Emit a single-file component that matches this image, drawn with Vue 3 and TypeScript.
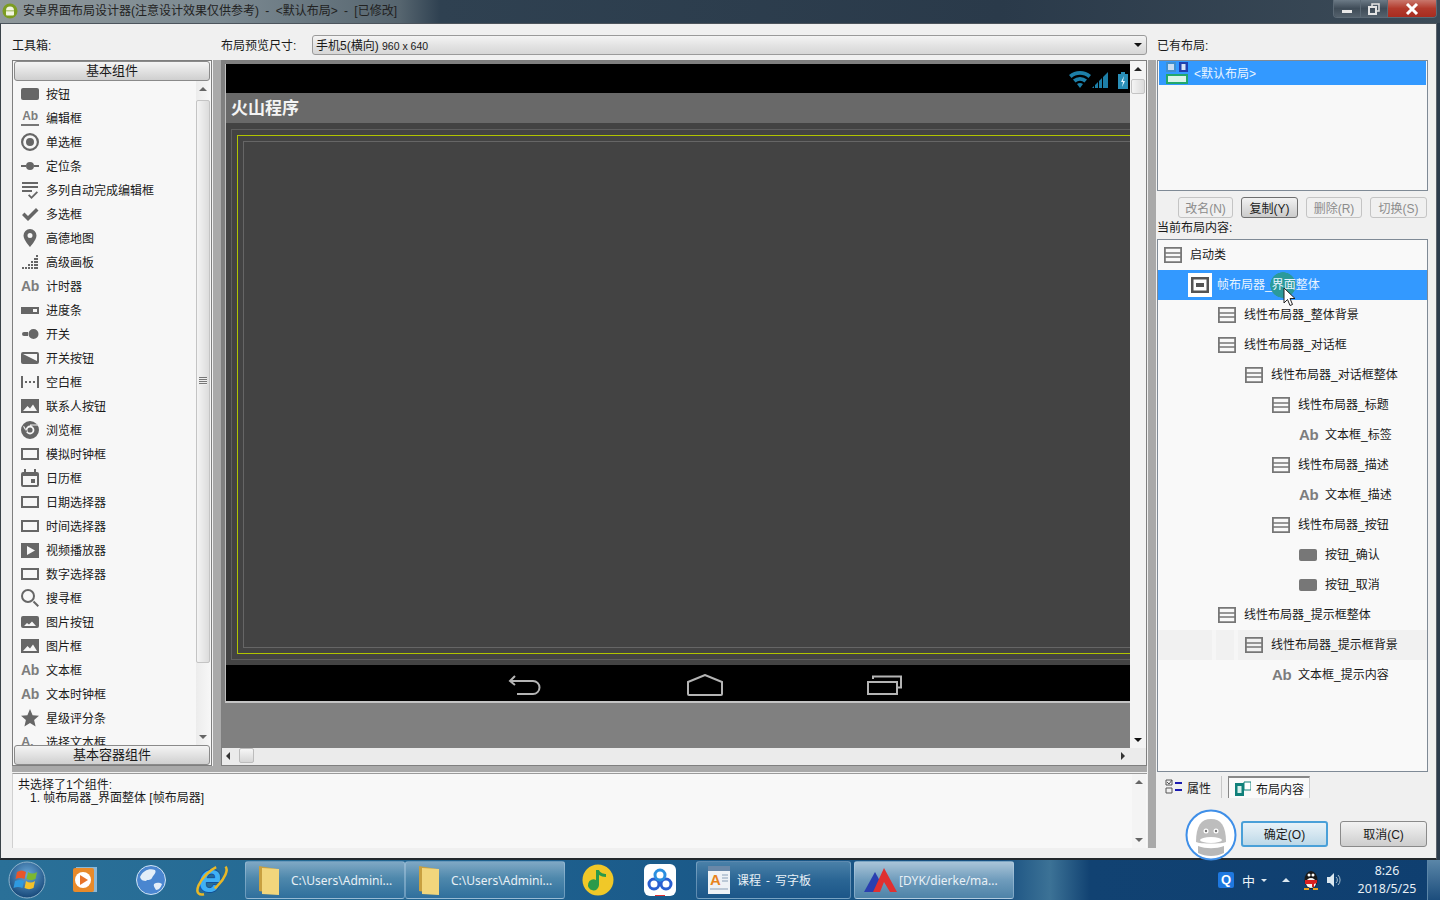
<script setup lang="ts">
type ToolItem = { label: string; icon: string };
type TreeItem = { label: string; icon: string; level: number; selected?: boolean; hover?: boolean };

const stair = [
    [15, 2], [13, 5], [15, 5], [10, 8], [13, 8], [15, 8], [7, 11], [10, 11], [13, 11], [15, 11],
    [1, 14], [4, 14], [7, 14], [10, 14], [13, 14], [15, 14],
]
    .map(([x, y]) => `M${x} ${y}h2v2h-2z`)
    .join('');

const paths: Record<string, string> = {
    button: 'M2 3h14a2 2 0 0 1 2 2v8a2 2 0 0 1-2 2H2a2 2 0 0 1-2-2V5a2 2 0 0 1 2-2z',
    radio: 'M9 0a9 9 0 1 0 0 18a9 9 0 1 0 0-18z M9 2.2a6.8 6.8 0 1 1 0 13.6a6.8 6.8 0 1 1 0-13.6z M9 5a4 4 0 1 0 0 8a4 4 0 1 0 0-8z',
    seek: 'M0 8h5v2H0z M13 8h5v2h-5z M9 5a4 4 0 1 0 0 8a4 4 0 1 0 0-8z',
    auto: 'M1 1h16v2H1z M1 5h16v2H1z M1 9h10v2H1z M7 14.5l1.3-1.3 2.2 2.2 5.2-5.2 1.3 1.3-6.5 6.5z',
    check: 'M1 10l2.5-2.5 3.5 3.5 8-8L17.5 5.5 7 16z',
    pin: 'M9 0a6.5 6.5 0 0 0-6.5 6.5C2.5 11 9 18 9 18s6.5-7 6.5-11.5A6.5 6.5 0 0 0 9 0z M9 4a2.5 2.5 0 1 1 0 5a2.5 2.5 0 1 1 0-5z',
    dots: stair,
    progress: 'M0 6h18v7H0z M12 8h4v3h-4z',
    switch: 'M3 7h4v4H3a2 2 0 0 1 0-4z M12.5 4a5 5 0 1 0 0 10a5 5 0 1 0 0-10z',
    toggle: 'M2 3h14a2 2 0 0 1 2 2v8a2 2 0 0 1-2 2H2a2 2 0 0 1-2-2V5a2 2 0 0 1 2-2z M2 5l14 7V5z',
    space: 'M0 3h2v12H0z M16 3h2v12h-2z M4 8h2v2H4z M8 8h2v2H8z M12 8h2v2h-2z',
    image: 'M0 2h18v14H0z M2 14l4.5-5 2.5 2.5 3-4 4 6.5z',
    imagebtn: 'M2 3h14a2 2 0 0 1 2 2v8a2 2 0 0 1-2 2H2a2 2 0 0 1-2-2V5a2 2 0 0 1 2-2z M3 13l3-3 2 1.5 3-3 4 4.5z',
    chrome: 'M9 0a9 9 0 1 0 0 18a9 9 0 1 0 0-18z M9 4.6a4.4 4.4 0 1 1 0 8.8a4.4 4.4 0 1 1 0-8.8z M9 6.4a2.6 2.6 0 1 0 0 5.2a2.6 2.6 0 1 0 0-5.2z M9 3.6h7.4v1H9z M3 5l3.2 5.4-.9.5L2.100 5.500z',
    frame: 'M0 3h18v12H0z M2 5v8h14V5z',
    calendar: 'M3 0h2v3h8V0h2v3h1a2 2 0 0 1 2 2v11a2 2 0 0 1-2 2H2a2 2 0 0 1-2-2V5a2 2 0 0 1 2-2h1z M2 7v9h14V7z M10 10h4v4h-4z',
    video: 'M0 2h18v15H0z M6 5v9l8-4.500z',
    search: 'M7 0a7 7 0 1 0 0 14a7 7 0 1 0 0-14z M7 2a5 5 0 1 1 0 10a5 5 0 1 1 0-10z M11.800 13.200l1.400-1.400 4.800 4.800-1.400 1.400z',
    star: 'M9 0l2.600 6.200 6.400.5-4.900 4.200 1.500 6.600L9 14l-5.600 3.500 1.500-6.600L0 6.700l6.400-.5z',
    linear: 'M0 1h18v16H0z M1.800 2.800v3.400h14.400V2.800z M1.800 7.800v2.400h14.400V7.800z M1.800 11.800v3.400h14.400v-3.400z',
    framelayout: 'M0 1h18v16H0z M2.500 3.500v11h13v-11z M5 7h8v4H5z',
};

const tools: ToolItem[] = [
    { label: '按钮', icon: 'button' },
    { label: '编辑框', icon: 'abu' },
    { label: '单选框', icon: 'radio' },
    { label: '定位条', icon: 'seek' },
    { label: '多列自动完成编辑框', icon: 'auto' },
    { label: '多选框', icon: 'check' },
    { label: '高德地图', icon: 'pin' },
    { label: '高级画板', icon: 'dots' },
    { label: '计时器', icon: 'ab' },
    { label: '进度条', icon: 'progress' },
    { label: '开关', icon: 'switch' },
    { label: '开关按钮', icon: 'toggle' },
    { label: '空白框', icon: 'space' },
    { label: '联系人按钮', icon: 'image' },
    { label: '浏览框', icon: 'chrome' },
    { label: '模拟时钟框', icon: 'frame' },
    { label: '日历框', icon: 'calendar' },
    { label: '日期选择器', icon: 'frame' },
    { label: '时间选择器', icon: 'frame' },
    { label: '视频播放器', icon: 'video' },
    { label: '数字选择器', icon: 'frame' },
    { label: '搜寻框', icon: 'search' },
    { label: '图片按钮', icon: 'imagebtn' },
    { label: '图片框', icon: 'image' },
    { label: '文本框', icon: 'ab' },
    { label: '文本时钟框', icon: 'ab' },
    { label: '星级评分条', icon: 'star' },
    { label: '选择文本框', icon: 'abs' },
];

const tree: TreeItem[] = [
    { label: '启动类', icon: 'linear', level: 0 },
    { label: '帧布局器_界面整体', icon: 'framelayout', level: 1, selected: true },
    { label: '线性布局器_整体背景', icon: 'linear', level: 2 },
    { label: '线性布局器_对话框', icon: 'linear', level: 2 },
    { label: '线性布局器_对话框整体', icon: 'linear', level: 3 },
    { label: '线性布局器_标题', icon: 'linear', level: 4 },
    { label: '文本框_标签', icon: 'ab', level: 5 },
    { label: '线性布局器_描述', icon: 'linear', level: 4 },
    { label: '文本框_描述', icon: 'ab', level: 5 },
    { label: '线性布局器_按钮', icon: 'linear', level: 4 },
    { label: '按钮_确认', icon: 'button', level: 5 },
    { label: '按钮_取消', icon: 'button', level: 5 },
    { label: '线性布局器_提示框整体', icon: 'linear', level: 2 },
    { label: '线性布局器_提示框背景', icon: 'linear', level: 3, hover: true },
    { label: '文本框_提示内容', icon: 'ab', level: 4 },
];

const actions = [
    { label: '改名(N)', disabled: true, width: 55 },
    { label: '复制(Y)', disabled: false, width: 57 },
    { label: '删除(R)', disabled: true, width: 56 },
    { label: '切换(S)', disabled: true, width: 57 },
];
</script>

<template>
    <div class="screen">
        <header class="titlebar">
            <svg class="app-logo" viewBox="0 0 16 16">
                <circle cx="8" cy="8" r="7.500" fill="#7c9c22" />
                <path d="M4 7.500a4 4 0 0 1 8 0z M4 8.300h8v3.200a1 1 0 0 1-1 1H5a1 1 0 0 1-1-1z" fill="#f2f5e0" />
            </svg>
            <span class="title-text">安卓界面布局设计器(注意设计效果仅供参考) - &lt;默认布局&gt; - [已修改]</span>
            <div class="win-controls">
                <div class="ctl ctl-min"><i></i></div>
                <div class="ctl ctl-max">
                    <svg width="12" height="12" viewBox="0 0 12 12">
                        <path d="M4 3V1h7v7H9" fill="none" stroke="#e4e4e4" stroke-width="1.500" />
                        <path d="M1 4h7v7H1z" fill="none" stroke="#e4e4e4" stroke-width="2" />
                    </svg>
                </div>
                <div class="ctl ctl-close">
                    <svg width="14" height="12" viewBox="0 0 14 12">
                        <path d="M2 1l10 10M12 1L2 11" stroke="#fff" stroke-width="3" />
                    </svg>
                </div>
            </div>
        </header>

        <main class="window">
            <section class="work">
                <div class="toolbar">
                    <label class="toolbox-label">工具箱:</label>
                    <label class="size-label">布局预览尺寸:</label>
                    <div class="select">
                        <span class="select-text">手机5(横向) <small>960 x 640</small></span>
                        <i class="arrow-down dark"></i>
                    </div>
                </div>

                <div class="panes">
                    <div class="toolbox">
                        <button class="group-btn">基本组件</button>
                        <div class="tool-wrap">
                            <ul class="tool-list">
                                <li v-for="item in tools" :key="item.label" class="tool-row">
                                    <span v-if="item.icon === 'ab'" class="ab">Ab</span>
                                    <span v-else-if="item.icon === 'abu'" class="ab ab-under">Ab</span>
                                    <span v-else-if="item.icon === 'abs'" class="ab ab-small">A.</span>
                                    <svg v-else class="icon" viewBox="0 0 18 18">
                                        <path :d="paths[item.icon]" fill-rule="evenodd" />
                                    </svg>
                                    <span class="row-text">{{ item.label }}</span>
                                </li>
                            </ul>
                            <div class="vscroll">
                                <i class="arrow-up"></i>
                                <div class="thumb tool-thumb"><b></b></div>
                                <div class="grow"></div>
                                <i class="arrow-down"></i>
                            </div>
                        </div>
                        <button class="group-btn">基本容器组件</button>
                    </div>

                    <div class="v-split pane-split"></div>

                    <div class="preview">
                        <div class="preview-top">
                            <div class="viewport">
                                <div class="phone">
                                    <div class="status-bar">
                                        <svg width="62" height="20" viewBox="0 0 62 20">
                                            <path d="M1 6a17 17 0 0 1 22 0l-2.500 3a13 13 0 0 0-17 0z M5 10.500a11 11 0 0 1 14 0l-2.500 3a7 7 0 0 0-9 0z M9 15a5 5 0 0 1 6 0l-3 4z" fill="#1d7fa8" />
                                            <path d="M24 19h2v-2l-2 2z M27 19h3v-6l-3 3z M31 19h3V9l-3 3z M35 19h5V3l-5 5z" fill="#1d7fa8" />
                                            <path d="M50 5h3V3h4v2h3v15H50z" fill="#2a8fb8" />
                                            <path d="M56 7l-3 6h2l-1 5 3-6h-2z" fill="#e8f6ff" />
                                        </svg>
                                    </div>
                                    <div class="app-title">火山程序</div>
                                    <div class="content">
                                        <div class="guide-outer">
                                            <div class="guide-yellow">
                                                <div class="guide-inner"></div>
                                            </div>
                                        </div>
                                    </div>
                                    <div class="nav-bar">
                                        <svg width="36" height="22" viewBox="0 0 36 22" class="nav-icon">
                                            <path d="M8 2L3 7l5 4 M3 7h23a5.500 5.500 0 0 1 0 13H10" />
                                        </svg>
                                        <svg width="36" height="22" viewBox="0 0 36 22" class="nav-icon">
                                            <path d="M1 8L18 1l17 7v12a1 1 0 0 1-1 1H2a1 1 0 0 1-1-1z" />
                                        </svg>
                                        <svg width="36" height="22" viewBox="0 0 36 22" class="nav-icon">
                                            <path d="M1 8h29v12H1z M6 5V2.500h28v11h-3" />
                                        </svg>
                                    </div>
                                </div>
                            </div>
                            <div class="vscroll preview-vs">
                                <i class="arrow-up dark"></i>
                                <div class="thumb phone-thumb"></div>
                                <div class="grow"></div>
                                <i class="arrow-down dark"></i>
                            </div>
                        </div>
                        <div class="hscroll">
                            <i class="arrow-left"></i>
                            <div class="h-thumb"></div>
                            <div class="grow"></div>
                            <i class="arrow-right"></i>
                        </div>
                    </div>
                </div>

                <div class="h-split"></div>

                <div class="message">
                    <div class="message-text">
                        <p>共选择了1个组件:</p>
                        <p class="msg-line">1. 帧布局器_界面整体 [帧布局器]</p>
                    </div>
                    <div class="vscroll msg-vs">
                        <i class="arrow-up"></i>
                        <div class="grow"></div>
                        <i class="arrow-down"></i>
                    </div>
                </div>
            </section>

            <div class="v-split right-split"></div>

            <aside class="side">
                <label class="side-label">已有布局:</label>
                <div class="layouts">
                    <div class="layout-row">
                        <svg width="23" height="23" viewBox="0 0 23 23">
                            <rect x="0" y="0" width="10" height="10" fill="#3f8fd0" />
                            <rect x="2" y="2" width="6" height="6" fill="#c8dcf0" />
                            <rect x="13" y="0" width="9" height="10" fill="#2040b0" />
                            <rect x="15.500" y="2" width="4" height="6" fill="#d8e4f8" />
                            <rect x="0" y="12" width="22" height="10" fill="#22a86c" />
                            <rect x="2" y="14" width="18" height="6" fill="#d8f4e8" />
                        </svg>
                        <span class="row-text">&lt;默认布局&gt;</span>
                    </div>
                </div>
                <div class="actions">
                    <button
                        v-for="a in actions"
                        :key="a.label"
                        class="action"
                        :class="{ disabled: a.disabled }"
                        :style="{ width: a.width + 'px' }"
                    >
                        {{ a.label }}
                    </button>
                </div>
                <label class="tree-label">当前布局内容:</label>
                <div class="tree">
                    <div
                        v-for="node in tree"
                        :key="node.label"
                        class="tree-row"
                        :class="{ selected: node.selected, hover: node.hover }"
                        :style="{ paddingLeft: 6 + node.level * 27 + 'px' }"
                    >
                        <span v-if="node.icon === 'ab'" class="ab tree-ab">Ab</span>
                        <span v-else class="tree-icon">
                            <svg class="icon" viewBox="0 0 18 18">
                                <path :d="paths[node.icon]" fill-rule="evenodd" />
                            </svg>
                        </span>
                        <span class="tree-text">{{ node.label }}</span>
                    </div>
                </div>
                <div class="tabs">
                    <div class="tab">
                        <svg width="18" height="16" viewBox="0 0 18 16">
                            <path d="M1 1h6v5H1z M1 9h6v5H1z M2 3l2 2 3-4" fill="none" stroke="#555" />
                            <path d="M10 3h7v2h-7z M10 10h7v2h-7z" fill="#1a1ab0" />
                        </svg>
                        <span>属性</span>
                    </div>
                    <div class="tab tab-active">
                        <svg width="16" height="15" viewBox="0 0 16 15">
                            <path d="M0 2h9v13H0z" fill="#10807a" />
                            <path d="M2.500 5h4v7h-4z" fill="#d8f0ec" />
                            <path d="M9 1h7v8H9z" fill="#fff" stroke="#10807a" />
                        </svg>
                        <span>布局内容</span>
                    </div>
                </div>
                <div class="dialog-btns">
                    <button class="dialog-btn primary">确定(O)</button>
                    <button class="dialog-btn">取消(C)</button>
                </div>
            </aside>

            <svg class="avatar" width="52" height="52" viewBox="0 0 52 52">
                <circle cx="26" cy="26" r="24.500" fill="#fff" stroke="#3f8fe8" stroke-width="2" />
                <path d="M11 33c0-16 5-23 15-23s15 7 15 23c-4 2-26 2-30 0z" fill="#bdbdbd" />
                <path d="M13 37c8 3 18 3 26 0v7c-8 4-18 4-26 0z" fill="#b8b8b8" />
                <ellipse cx="26" cy="31" rx="11" ry="3" fill="#fff" />
                <circle cx="21" cy="22" r="2.500" fill="#fff" />
                <circle cx="31" cy="22" r="2.500" fill="#fff" />
                <circle cx="21" cy="22" r="1.200" fill="#777" />
                <circle cx="31" cy="22" r="1.200" fill="#777" />
            </svg>

            <svg width="14" height="20" viewBox="0 0 14 20" class="pointer">
                <path d="M1 1v15l3.500-3.500 2.500 6 2.500-1-2.500-6h5z" fill="#fff" stroke="#222" />
            </svg>
        </main>

        <footer class="taskbar">
            <div class="slot start">
                <svg width="38" height="38" viewBox="0 0 38 38">
                    <defs>
                        <radialGradient id="orb" cx="50%" cy="35%" r="70%">
                            <stop offset="0" stop-color="#6aa8d8" />
                            <stop offset="1" stop-color="#0f3f70" />
                        </radialGradient>
                    </defs>
                    <circle cx="19" cy="19" r="18" fill="url(#orb)" stroke="#8fb4cc" />
                    <path d="M9 11c3-2 6-2 9 0l-1.500 7c-3-1.500-6-1.500-9 0z" fill="#e8562a" />
                    <path d="M20 11c3 2 6 2 9 0l-1.500 7c-3 1.500-6 1.500-9 0z" fill="#7cb82f" />
                    <path d="M7 20c3-1.500 6-1.500 9 0l-1.500 7c-3-1.500-6-1.500-9 0z" fill="#2f9ae0" />
                    <path d="M18 20c3 2 6 2 9 0l-1.500 7c-3 1.500-6 1.500-9 0z" fill="#f5c22a" />
                </svg>
            </div>
            <div class="slot s-player">
                <svg width="26" height="30" viewBox="0 0 26 30">
                    <path d="M4 2h21v25H4z" fill="#8ab8d8" />
                    <rect x="1" y="3" width="21" height="24" rx="2" fill="#e88a2a" />
                    <circle cx="11" cy="15" r="8" fill="#fff" />
                    <path d="M8 10l8 5-8 5z" fill="#e8742a" />
                </svg>
            </div>
            <div class="slot s-globe">
                <svg width="30" height="30" viewBox="0 0 30 30">
                    <circle cx="15" cy="15" r="14.500" fill="#4a86d0" stroke="#d0e4f4" />
                    <path d="M4 12c3-7 10-9 15-7 2 3-2 5-3 8-2 3-5 1-6 3-3 0-5-1-6-4z M18 19c3-2 6-1 8 0-1 3-3 6-6 6-1-2-3-4-2-6z" fill="#e4eef8" />
                </svg>
            </div>
            <div class="slot s-ie">
                <svg width="36" height="36" viewBox="0 0 36 36">
                    <text x="5" y="30" class="ie-letter">e</text>
                    <ellipse cx="18" cy="18" rx="19" ry="8" fill="none" stroke="#e8b828" stroke-width="2.500" stroke-dasharray="26 12 40 12" transform="rotate(-45 18 18)" />
                </svg>
            </div>
            <div class="task glass">
                <svg class="folder" width="26" height="32" viewBox="0 0 26 32">
                    <path d="M3 2l18 3v25L3 27z" fill="#c8a040" />
                    <path d="M6 4l17 1v26L6 30z" fill="#f2d67c" />
                </svg>
                <span>C:\Users\Admini...</span>
            </div>
            <div class="task glass">
                <svg class="folder" width="26" height="32" viewBox="0 0 26 32">
                    <path d="M3 2l18 3v25L3 27z" fill="#c8a040" />
                    <path d="M6 4l17 1v26L6 30z" fill="#f2d67c" />
                </svg>
                <span>C:\Users\Admini...</span>
            </div>
            <div class="slot s-music">
                <svg width="32" height="32" viewBox="0 0 32 32">
                    <circle cx="16" cy="16" r="15.500" fill="#f0c828" />
                    <path d="M14 6h3c1 3 5 4 7 4v3c-3 0-5-1-7-2v10a5.500 5.500 0 1 1-3-5z" fill="#2a9a4a" />
                </svg>
            </div>
            <div class="slot s-cloud">
                <svg width="32" height="32" viewBox="0 0 32 32">
                    <rect width="32" height="32" rx="6" fill="#fff" />
                    <circle cx="10" cy="20" r="5" fill="none" stroke="#2a5fd0" stroke-width="3" />
                    <circle cx="22" cy="20" r="5" fill="none" stroke="#2a5fd0" stroke-width="3" />
                    <circle cx="16" cy="11" r="5" fill="none" stroke="#2a8fe0" stroke-width="3" />
                    <path d="M11 31h10v1H11z" fill="#e03030" />
                </svg>
            </div>
            <div class="task dark-task wordpad">
                <svg width="24" height="32" viewBox="0 0 24 32">
                    <path d="M1 2h22v28H1z" fill="#eef2f6" />
                    <path d="M1 2h22v5H1z" fill="#6a88a8" />
                    <text x="3" y="21" class="pad-letter">A</text>
                    <path d="M15 11h6M15 14h6M15 17h6M3 25h18" stroke="#8aa0b8" />
                </svg>
                <span class="cjk">课程 - 写字板</span>
            </div>
            <div class="task glass video">
                <svg width="34" height="26" viewBox="0 0 34 26">
                    <path d="M0 25L11 5l6 11-5 9z" fill="#2a3fb0" />
                    <path d="M9 25L20 1l13 24h-7l-6-10-4 10z" fill="#e03030" />
                </svg>
                <span>[DYK/dierke/ma...</span>
            </div>
            <div class="grow"></div>
            <div class="tray">
                <span class="q-badge">Q</span>
                <span class="ime">中</span>
                <i class="tray-down"></i>
                <i class="tray-up"></i>
                <svg class="tray-qq" width="16" height="20" viewBox="0 0 16 20">
                    <ellipse cx="8" cy="10" rx="6.500" ry="9" fill="#1a1a1a" />
                    <ellipse cx="8" cy="13" rx="5" ry="5" fill="#f4f4f4" />
                    <path d="M2 10h12v3l-3 1v3H9v-3H2z" fill="#d82020" />
                    <circle cx="6" cy="5" r="1.500" fill="#fff" />
                    <circle cx="10" cy="5" r="1.500" fill="#fff" />
                    <path d="M1 18h5v2H1z M10 18h5v2h-5z" fill="#e8a020" />
                </svg>
                <svg class="tray-vol" width="16" height="16" viewBox="0 0 16 16">
                    <path d="M1 5h3l4-4v14l-4-4H1z" fill="#dce8f0" />
                    <path d="M10 5a4 4 0 0 1 0 6 M12 3a7 7 0 0 1 0 10" fill="none" stroke="#a8c0d0" />
                </svg>
                <div class="clock">
                    <span>8:26</span>
                    <span>2018/5/25</span>
                </div>
                <div class="show-desktop"></div>
            </div>
        </footer>
    </div>
</template>

<style scoped>
* {
    box-sizing: border-box;
}
.screen {
    width: 1440px;
    height: 900px;
    display: flex;
    flex-direction: column;
    overflow: hidden;
    background: #2c3c4c;
    font-family: "Liberation Sans", "Noto Sans CJK SC", sans-serif;
    font-size: 12px;
    color: #1a1a1a;
}
p {
    margin: 0;
}
ul {
    margin: 0;
    padding: 0;
    list-style: none;
}
button {
    font: inherit;
    color: inherit;
    padding: 0;
}
i {
    display: block;
}
.grow {
    flex: 1;
}
.row-text {
    margin-bottom: 2px;
}

.titlebar {
    height: 23px;
    flex: none;
    display: flex;
    align-items: flex-start;
    background: linear-gradient(90deg, #8f989b 0, #7c8a92 220px, #56656f 400px, #2f4151 440px, #2a3a4a 1000px, #3c4b58 1440px);
}
.app-logo {
    width: 16px;
    height: 16px;
    margin: 3px 0 0 2px;
}
.title-text {
    margin: 2px 0 0 5px;
    line-height: 18px;
    color: #222;
    word-spacing: 3px;
}
.win-controls {
    margin-left: auto;
    margin-right: 3px;
    height: 18px;
    display: flex;
    border: 1px solid #5c6a76;
    border-top: none;
    border-radius: 0 0 4px 4px;
    overflow: hidden;
}
.ctl {
    display: flex;
    align-items: center;
    justify-content: center;
    border-right: 1px solid #5c6a76;
}
.ctl-min,
.ctl-max {
    width: 27px;
    background: linear-gradient(#6c7a86, #3f4c58 50%, #54616c);
}
.ctl-min i {
    width: 10px;
    height: 3px;
    margin-top: 5px;
    background: #e8e8e8;
}
.ctl-close {
    width: 48px;
    border: none;
    background: linear-gradient(#c9776c, #b23a2c 50%, #a82c20);
}

.window {
    flex: 1;
    position: relative;
    display: flex;
    width: 1438px;
    padding: 11px 0 10px 11px;
    background: #f0f0f0;
    border-top: 1px solid #4c545c;
    border-left: 2px solid #3a4248;
    border-bottom: 2px solid #23282c;
    border-right: 1px solid #5c646c;
    margin-left: -1px;
}
.work {
    width: 1135px;
    display: flex;
    flex-direction: column;
}
.toolbar {
    height: 25px;
    flex: none;
    display: flex;
    align-items: flex-start;
}
.toolbar label {
    line-height: 23px;
}
.toolbox-label {
    width: 209px;
}
.size-label {
    width: 91px;
}
.select {
    flex: 1;
    height: 20px;
    display: flex;
    align-items: center;
    justify-content: space-between;
    padding: 0 4px 0 3px;
    border: 1px solid #9a9a9a;
    border-radius: 3px;
    background: linear-gradient(#f4f4f4, #e4e4e4 50%, #d6d6d6);
}
.select-text {
    margin-bottom: 2px;
}
.select-text small {
    font-size: 10.5px;
}
.arrow-down,
.arrow-up {
    width: 0;
    height: 0;
    border-left: 4px solid transparent;
    border-right: 4px solid transparent;
    margin: 6px auto;
}
.arrow-down {
    border-top: 4px solid #666;
}
.arrow-up {
    border-bottom: 4px solid #666;
}
.arrow-down.dark {
    border-top-color: #111;
    margin: 0;
}
.arrow-up.dark {
    border-bottom-color: #222;
}
.preview-vs .arrow-down.dark {
    margin: 6px auto;
}

.panes {
    height: 706px;
    flex: none;
    display: flex;
}
.toolbox {
    width: 200px;
    flex: none;
    display: flex;
    flex-direction: column;
    padding: 0 1px;
    background: #f7f7f7;
    border: 1px solid #7f7f7f;
}
.group-btn {
    height: 20px;
    flex: none;
    margin: 0;
    padding-bottom: 2px;
    border: 1px solid #8a8a8a;
    border-radius: 3px;
    background: linear-gradient(#f4f4f4, #e2e2e2 50%, #cfcfcf);
    font-size: 13px;
    line-height: 15px;
}
.tool-wrap {
    flex: 1;
    min-height: 0;
    display: flex;
}
.tool-list {
    flex: 1;
    min-width: 0;
    height: 664px;
    overflow: hidden;
    padding-top: 1px;
}
.tool-row {
    height: 24px;
    display: flex;
    align-items: center;
    gap: 7px;
    padding-left: 7px;
    font-size: 12px;
}
.icon {
    width: 18px;
    height: 18px;
    flex: none;
    fill: #666;
}
.ab {
    width: 18px;
    flex: none;
    font-weight: 700;
    font-size: 14px;
    letter-spacing: -0.3px;
    color: #7d7d7d;
    font-family: "Liberation Sans", sans-serif;
    line-height: 18px;
}
.ab-under {
    font-size: 12px;
    line-height: 13px;
    border-bottom: 2px solid #777;
    height: 16px;
    text-align: center;
}
.ab-small {
    font-size: 13px;
}
.vscroll {
    width: 14px;
    flex: none;
    display: flex;
    flex-direction: column;
    background: linear-gradient(90deg, #ececec, #f7f7f7);
}
.thumb {
    border: 1px solid #c4c4c4;
    border-radius: 2px;
    background: linear-gradient(90deg, #f4f4f4, #dcdcdc);
}
.tool-thumb {
    height: 563px;
    margin-top: 3px;
    position: relative;
}
.tool-thumb b {
    position: absolute;
    left: 2px;
    right: 2px;
    top: 276px;
    height: 8px;
    background: repeating-linear-gradient(#777 0 1px, #eee 1px 2px);
}
.v-split {
    width: 10px;
    flex: none;
    background: linear-gradient(90deg, #f0f0f0 0 1px, #a9a9a9 1px 9px, #f0f0f0 9px);
}
.pane-split {
    width: 9px;
}

.preview {
    flex: 1;
    min-width: 0;
    display: flex;
    flex-direction: column;
    background: #efefef;
    border: 1px solid #7f7f7f;
}
.preview-top {
    flex: 1;
    min-height: 0;
    display: flex;
}
.viewport {
    width: 908px;
    flex: none;
    overflow: hidden;
    background: #808080;
    padding: 3px 0 0 3px;
}
.phone {
    width: 960px;
    border-bottom: 2px solid #c4c4c4;
    border-left: 1px solid #bdbdbd;
}
.status-bar {
    height: 29px;
    background: #000;
    padding: 5px 0 0 842px;
}
.status-bar svg {
    display: block;
}
.app-title {
    height: 30px;
    background: #696969;
    color: #f4f4f4;
    font-size: 17px;
    font-weight: 700;
    line-height: 31px;
    padding-left: 5px;
}
.content {
    height: 542px;
    background: #434343;
    padding: 6px 5px 5px 5px;
}
.guide-outer {
    height: 100%;
    padding: 5px;
    border: 1px solid #5f5f5f;
}
.guide-yellow {
    height: 100%;
    padding: 5px;
    border: 1px solid #b0c400;
}
.guide-inner {
    height: 100%;
    border: 1px solid #666;
}
.nav-bar {
    height: 36px;
    background: #000;
    display: flex;
    align-items: flex-end;
    gap: 144px;
    padding: 0 0 5px 281px;
}
.nav-icon {
    fill: none;
    stroke: #b4b4b4;
    stroke-width: 2;
}
.preview-vs {
    width: 16px;
    background: #f4f4f4;
}
.phone-thumb {
    height: 15px;
    margin: 2px 1px 0;
}
.hscroll {
    height: 17px;
    flex: none;
    display: flex;
    align-items: center;
    padding: 0 21px 2px 4px;
    background: #ebebeb;
}
.h-thumb {
    width: 15px;
    height: 15px;
    margin-left: 9px;
    border: 1px solid #bcbcbc;
    border-radius: 2px;
    background: linear-gradient(#f6f6f6, #d6d6d6);
}
.arrow-left,
.arrow-right {
    width: 0;
    height: 0;
    border-top: 4px solid transparent;
    border-bottom: 4px solid transparent;
}
.arrow-left {
    border-right: 4px solid #333;
}
.arrow-right {
    border-left: 4px solid #333;
}
.h-split {
    height: 7px;
    flex: none;
    background: linear-gradient(#a9a9a9 0 6px, #f0f0f0 6px);
}
.message {
    flex: 1;
    display: flex;
    background: #f8f8f8;
    border-top: 1px solid #9a9a9a;
    border-left: 1px solid #d0d0d0;
}
.message-text {
    flex: 1;
    padding: 5px 0 0 5px;
    line-height: 13px;
}
.msg-line {
    padding-left: 12px;
}
.msg-vs {
    background: #f4f4f4;
    width: 14px;
    margin-right: 1px;
}

.right-split {
    height: 788px;
    margin-top: 25px;
}
.side {
    width: 271px;
    flex: none;
    display: flex;
    flex-direction: column;
}
.side-label {
    height: 25px;
    flex: none;
    line-height: 23px;
}
.layouts {
    height: 131px;
    flex: none;
    padding: 0 1px;
    background: #f8f8f8;
    border: 1px solid #7f8a96;
}
.layout-row {
    height: 24px;
    display: flex;
    align-items: center;
    gap: 5px;
    padding-left: 7px;
    background: #3399ff;
    color: #e8f4ff;
}
.actions {
    display: flex;
    justify-content: flex-end;
    gap: 8px;
    margin-top: 6px;
    padding-right: 1px;
    flex: none;
}
.action {
    height: 21px;
    border: 1px solid #6f6f6f;
    border-radius: 3px;
    background: linear-gradient(#f2f2f2, #dedede 50%, #cbcbcb);
}
.action.disabled {
    border-color: #c4c4c4;
    background: #f0f0f0;
    color: #8c8c8c;
}
.tree-label {
    height: 21px;
    flex: none;
    line-height: 20px;
}
.tree {
    height: 533px;
    flex: none;
    background: #f9f9f9;
    border: 1px solid #7f8a96;
}
.tree-row {
    height: 30px;
    display: flex;
    align-items: center;
}
.tree-icon {
    width: 18px;
    height: 18px;
    flex: none;
}
.tree-icon .icon {
    display: block;
    fill: #777;
}
.tree-text {
    margin: 0 0 4px 8px;
}
.tree-ab {
    font-size: 15px;
}
.tree-row.selected {
    color: #e8f4ff;
    background: radial-gradient(circle 13px at 125px 15px, #2b9a9a 96%, transparent), #3399ff;
}
.tree-row.selected .tree-icon {
    background: #fff;
    box-shadow: 0 0 0 3px #fff;
}
.tree-row.selected .icon {
    fill: #555;
}
.tree-row.hover {
    background: linear-gradient(90deg, #f1f1f1 0 54px, #f6f6f6 54px 58px, #f1f1f1 58px 76px, #f6f6f6 76px 80px, #f1f1f1 80px);
}
.tabs {
    height: 28px;
    flex: none;
    display: flex;
    gap: 6px;
    padding: 4px 0 0 8px;
}
.tab {
    height: 22px;
    display: flex;
    align-items: center;
    gap: 4px;
    padding-right: 10px;
    border-right: 1px solid #c8c8c8;
}
.tab-active {
    gap: 5px;
    padding: 0 5px 0 6px;
    background: #fafafa;
    border-top: 2px solid #888;
    border-left: 1px solid #888;
}
.dialog-btns {
    flex: none;
    display: flex;
    justify-content: flex-end;
    gap: 12px;
    margin-top: 21px;
    padding-right: 1px;
}
.dialog-btn {
    width: 87px;
    height: 26px;
    padding-bottom: 2px;
    border: 1px solid #8a8a8a;
    border-radius: 3px;
    background: linear-gradient(#f2f2f2, #e0e0e0 50%, #cdcdcd);
}
.dialog-btn.primary {
    border: 2px solid #4aa0d8;
    background: linear-gradient(#e8f2f8, #d4e6f0 50%, #bcd8e8);
}
.avatar {
    position: absolute;
    left: 1184px;
    top: 785px;
}
.pointer {
    position: absolute;
    left: 1282px;
    top: 263px;
}

.taskbar {
    height: 40px;
    flex: none;
    display: flex;
    align-items: center;
    color: #e8f0f6;
    font-family: "Noto Sans", "Noto Sans CJK SC", sans-serif;
    background: linear-gradient(90deg, #2a7098 0, #256a94 300px, #1c5d8c 600px, #174f80 1000px, #3c7296 1050px, #114272 1090px, #0f3f70 1440px);
}
.slot {
    display: flex;
    justify-content: center;
    align-items: center;
    flex: none;
}
.start {
    width: 54px;
}
.s-player {
    width: 62px;
}
.s-globe {
    width: 70px;
}
.s-ie {
    width: 52px;
    margin-right: 7px;
}
.ie-letter {
    font: italic 700 40px "Liberation Sans", sans-serif;
    fill: #3fb0f5;
    stroke: #0c4a9a;
    stroke-width: 1.5px;
    paint-order: stroke;
}
.task {
    height: 38px;
    flex: none;
    display: flex;
    align-items: center;
    gap: 9px;
    border: 1px solid rgba(190, 215, 235, 0.4);
    border-radius: 3px;
    font-size: 12px;
    white-space: nowrap;
    overflow: hidden;
}
.glass {
    width: 160px;
    padding-left: 10px;
    background: linear-gradient(#7fa8c4, #4e88ac 45%, #2f6f9c);
}
.folder {
    flex: none;
}
.s-music {
    width: 62px;
    margin-left: 2px;
}
.s-cloud {
    width: 62px;
}
.dark-task {
    background: linear-gradient(#4a80a8, #2a6594 50%, #1c5688);
}
.wordpad {
    width: 155px;
    margin-left: 5px;
    margin-right: 3px;
    padding-left: 10px;
    gap: 6px;
}
.pad-letter {
    font: 700 15px "Liberation Sans", sans-serif;
    fill: #e8841e;
}
.cjk {
    font-size: 12px;
    word-spacing: 2px;
}
.video {
    padding-left: 9px;
    gap: 1px;
    background: linear-gradient(#a9c4d8, #6f9cbc 50%, #4e83a8);
}
.tray {
    display: flex;
    align-items: center;
    height: 100%;
    flex: none;
}
.q-badge {
    width: 16px;
    height: 16px;
    border-radius: 2px;
    background: #1e78e0;
    color: #fff;
    font: 700 13px/16px "Liberation Sans", sans-serif;
    text-align: center;
}
.ime {
    margin-left: 8px;
    font-size: 13px;
    color: #eef4f8;
}
.tray-down {
    margin-left: 6px;
    border-left: 3px solid transparent;
    border-right: 3px solid transparent;
    border-top: 3px solid #dce8f0;
}
.tray-up {
    margin-left: 15px;
    border-left: 4px solid transparent;
    border-right: 4px solid transparent;
    border-bottom: 4px solid #dce8f0;
}
.tray-qq {
    margin-left: 13px;
}
.tray-vol {
    margin-left: 7px;
}
.clock {
    width: 78px;
    margin-left: 6px;
    display: flex;
    flex-direction: column;
    align-items: center;
    font-size: 12.4px;
    line-height: 18px;
}
.show-desktop {
    width: 13px;
    height: 100%;
    margin-left: 1px;
    border-left: 1px solid #5c86a8;
    background: linear-gradient(#5a86a8, #1c4d7c);
}
</style>

<style>
html,
body {
    margin: 0;
    background: #2c3c4c;
}
</style>
